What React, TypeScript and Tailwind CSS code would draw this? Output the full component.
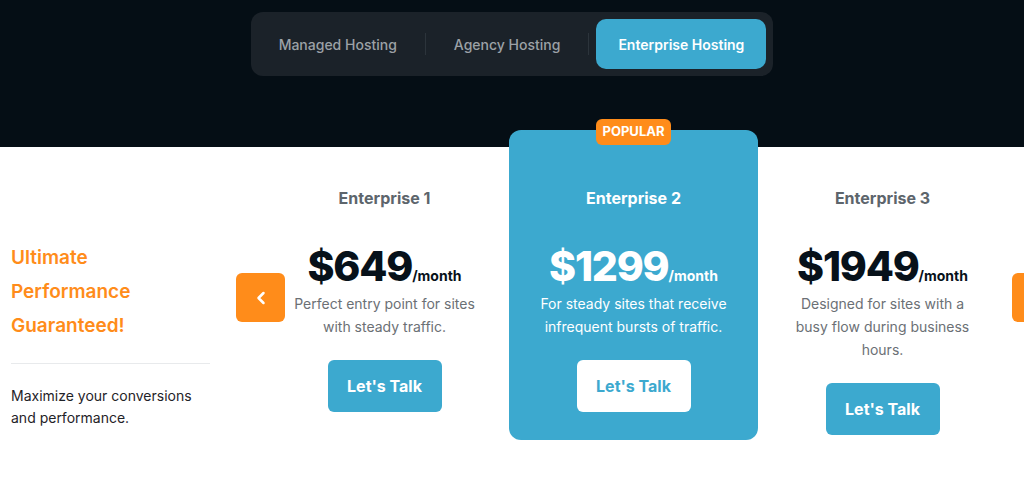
import { ChevronLeft, ChevronRight } from "lucide-react";

type Plan = {
  name: string;
  price: string;
  desc: string;
  popular?: boolean;
};

const PLANS: Plan[] = [
  { name: "Enterprise 1", price: "$649", desc: "Perfect entry point for sites with steady traffic." },
  { name: "Enterprise 2", price: "$1299", desc: "For steady sites that receive infrequent bursts of traffic.", popular: true },
  { name: "Enterprise 3", price: "$1949", desc: "Designed for sites with a busy flow during business hours." },
];

// ── Hosting type switcher ─────────────────────────────────────────────
function HostingTabs() {
  return (
    <div className="flex items-center h-[64px] rounded-xl bg-[#1b2229] pr-[7px]">
      <div className="px-[28px] text-[14px] font-medium text-[#9ca1a6]">Managed Hosting</div>
      <div className="w-px h-[22px] bg-[#2c343b]" />
      <div className="px-[28px] text-[14px] font-medium text-[#9ca1a6]">Agency Hosting</div>
      <div className="w-px h-[22px] bg-[#2c343b]" />
      <button className="ml-[7px] h-[50px] px-[22px] rounded-[10px] bg-[#3ca9cf] text-[14px] font-semibold text-white">
        Enterprise Hosting
      </button>
    </div>
  );
}

function PlanCard({ plan }: { plan: Plan }) {
  const hot = !!plan.popular;
  return (
    <div
      className={`relative w-[249px] shrink-0 flex flex-col items-center text-center px-[29px] pt-[56px] pb-[28px] rounded-xl ${
        hot ? "bg-[#3ca9cf]" : ""
      }`}
    >
      {hot && (
        <div className="absolute -top-[11px] left-1/2 -translate-x-1/2 h-[26px] px-[7px] flex items-center rounded-md bg-[#ff8c1a] text-[13px] font-bold text-white">
          POPULAR
        </div>
      )}
      <p className={`text-[16px] leading-6 font-bold ${hot ? "text-white" : "text-[#5d656c]"}`}>{plan.name}</p>
      <div className={`mt-8 flex items-baseline ${hot ? "text-white" : "text-[#07111a]"}`}>
        <span className="text-[41px] leading-[48px] font-extrabold tracking-[-0.03em]">{plan.price}</span>
        <span className="text-[14px] font-bold">/month</span>
      </div>
      <p className={`mt-[2px] text-[14px] leading-[23px] ${hot ? "text-white" : "text-[#6b7075]"}`}>{plan.desc}</p>
      <button
        className={`mt-[22px] w-[114px] h-[52px] rounded-md text-[16px] font-bold ${
          hot ? "bg-white text-[#3ca9cf]" : "bg-[#3ca9cf] text-white"
        }`}
      >
        Let's Talk
      </button>
    </div>
  );
}

export default function App() {
  return (
    <div className="w-[1024px] h-[500px] overflow-hidden bg-white font-['Inter',sans-serif]">
      <div className="h-[147px] bg-[#050e15] flex justify-center items-start pt-3">
        <HostingTabs />
      </div>

      <div className="relative flex items-start -mt-[17px]">
        {/* Left intro column */}
        <div className="w-[199px] ml-[11px] mt-[111px] shrink-0">
          <h2 className="text-[19px] leading-[34px] font-semibold text-[#ff8c1a]">
            Ultimate Performance Guaranteed!
          </h2>
          <div className="mt-[20px] h-px bg-[#e8eaec]" />
          <p className="mt-[21px] text-[14px] leading-[22px] text-[#1f2328]">
            Maximize your conversions and performance.
          </p>
        </div>

        {/* Plans carousel */}
        <div className="ml-[50px] flex items-start">
          {PLANS.map((p) => (
            <PlanCard key={p.name} plan={p} />
          ))}
        </div>

        <button className="absolute left-[236px] top-[143px] w-[49px] h-[49px] rounded-md bg-[#ff8c1a] flex items-center justify-center">
          <ChevronLeft className="size-5 text-white" strokeWidth={3} />
        </button>
        <button className="absolute left-[1012px] top-[143px] w-[49px] h-[49px] rounded-md bg-[#ff8c1a] flex items-center justify-center">
          <ChevronRight className="size-5 text-white" strokeWidth={3} />
        </button>
      </div>
    </div>
  );
}
